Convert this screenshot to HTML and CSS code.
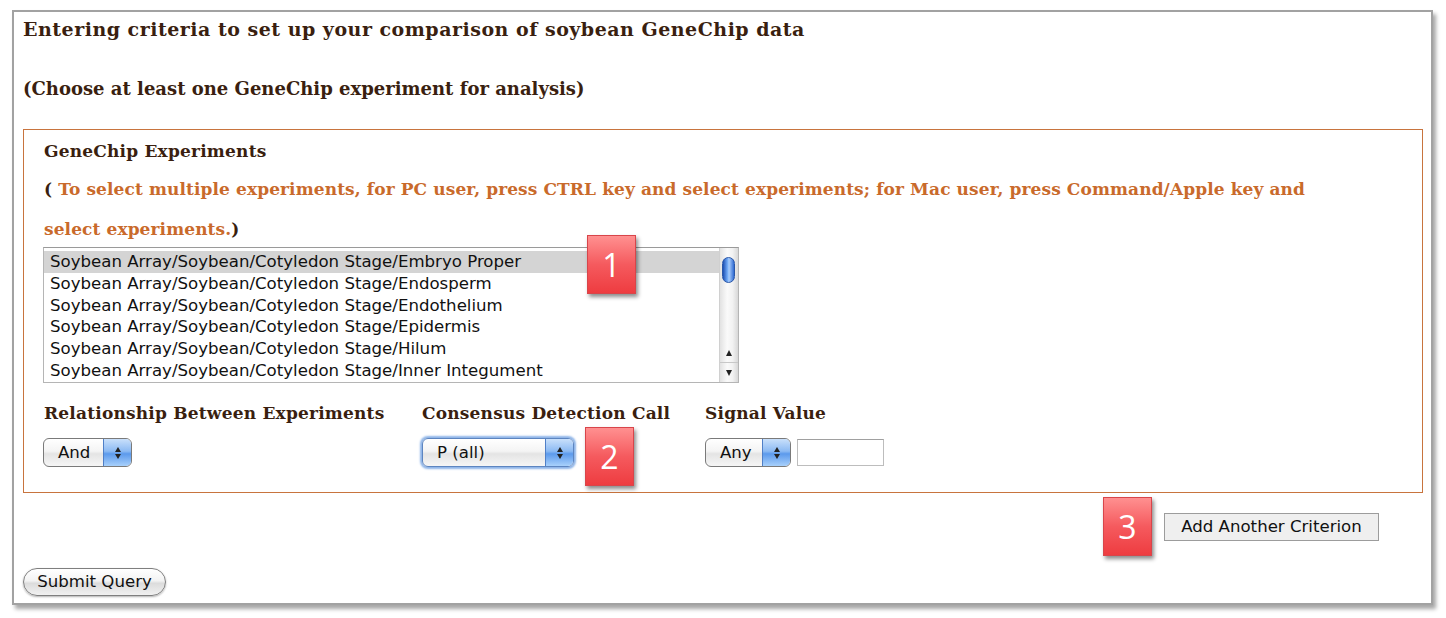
FILE: index.html
```html
<!DOCTYPE html>
<html>
<head>
<meta charset="utf-8">
<link rel="stylesheet" href="styles.css">
</head>
<body>
<div class="frame">
  <h1 class="title">Entering criteria to set up your comparison of soybean GeneChip data</h1>
  <h2 class="subtitle">(Choose at least one GeneChip experiment for analysis)</h2>
  <div class="fieldset">
    <div class="legend">GeneChip Experiments</div>
    <p class="hint"><span class="paren">(</span> To select multiple experiments, for PC user, press CTRL key and select experiments; for Mac user, press Command/Apple key and select experiments.<span class="paren">)</span></p>
    <div class="listbox">
      <div class="rows">
        <div class="row selected">Soybean Array/Soybean/Cotyledon Stage/Embryo Proper</div>
        <div class="row">Soybean Array/Soybean/Cotyledon Stage/Endosperm</div>
        <div class="row">Soybean Array/Soybean/Cotyledon Stage/Endothelium</div>
        <div class="row">Soybean Array/Soybean/Cotyledon Stage/Epidermis</div>
        <div class="row">Soybean Array/Soybean/Cotyledon Stage/Hilum</div>
        <div class="row">Soybean Array/Soybean/Cotyledon Stage/Inner Integument</div>
      </div>
      <div class="scrollbar">
        <div class="track"><div class="thumb"></div></div>
        <div class="arrow up"><span class="tri-up"></span></div>
        <div class="arrow down"><span class="tri-down"></span></div>
      </div>
    </div>
    <div class="criteria">
      <div class="col col1">
        <div class="label">Relationship Between Experiments</div>
        <div class="popup w-and"><span class="ptext">And</span><span class="pbtn"><span class="tri-up small"></span><span class="tri-down small"></span></span></div>
      </div>
      <div class="col col2">
        <div class="label">Consensus Detection Call</div>
        <div class="popup w-p focus"><span class="ptext">P (all)</span><span class="pbtn"><span class="tri-up small"></span><span class="tri-down small"></span></span></div>
      </div>
      <div class="col col3">
        <div class="label">Signal Value</div>
        <div class="inline">
          <div class="popup w-any"><span class="ptext">Any</span><span class="pbtn"><span class="tri-up small"></span><span class="tri-down small"></span></span></div>
          <div class="textbox"></div>
        </div>
      </div>
    </div>
  </div>
  <div class="addrow"><div class="addbtn">Add Another Criterion</div></div>
  <div class="submitrow"><div class="submitbtn">Submit Query</div></div>

  <div class="badge b1">1</div>
  <div class="badge b2">2</div>
  <div class="badge b3">3</div>
</div>
</body>
</html>
```

FILE: styles.css
```css
html, body { margin: 0; padding: 0; background: #fff; }
body { width: 1446px; height: 618px; overflow: hidden; }

.frame {
  position: relative;
  margin: 10px 0 0 12px;
  height: 591px;
  width: 1400px;
  border: 2px solid #a2a2a2;
  box-shadow: 3px 4px 4px rgba(0,0,0,0.35);
  padding: 0 8px 0 9px;
  box-sizing: content-box;
  font-family: "DejaVu Serif", Georgia, serif;
  color: #3a1f10;
}

.title {
  margin: 7px 0 0;
  font-size: 19px;
  letter-spacing: 0.5px;
  line-height: 20px;
  font-weight: bold;
  white-space: nowrap;
}
.subtitle {
  margin: 40px 0 0;
  font-size: 18px;
  line-height: 20px;
  font-weight: bold;
  white-space: nowrap;
}

.fieldset {
  margin-top: 30px;
  border: 1px solid #c8743e;
  padding: 11px 0 25px 20px;
}
.legend {
  font-size: 17px;
  letter-spacing: 0.2px;
  line-height: 20px;
  font-weight: bold;
}
.hint {
  margin: 8px 0 0;
  font-size: 17px;
  letter-spacing: 0.1px;
  line-height: 40px;
  font-weight: bold;
  color: #c96a2b;
  width: 1275px;
}
.paren { color: #3a1f10; }

.listbox {
  margin-top: -2px;
  margin-left: -1px;
  width: 694px;
  height: 134px;
  border: 1px solid #b5b5b5;
  border-top-color: #9a9a9a;
  display: flex;
  font-family: "DejaVu Sans", "Lucida Grande", sans-serif;
  font-size: 16.6px;
  color: #111;
}
.rows { flex: 1; padding-top: 3px; overflow: hidden; }
.row { height: 21.8px; line-height: 21.8px; padding-left: 6px; white-space: nowrap; }
.row.selected { background: #d4d4d4; }

.scrollbar {
  width: 18px;
  display: flex;
  flex-direction: column;
  background: linear-gradient(to right, #e2e2e2, #fafafa 40%, #f2f2f2 70%, #d8d8d8);
  border-left: 1px solid #d0d0d0;
}
.track { flex: 1; position: relative; }
.thumb {
  position: absolute;
  left: 2px; top: 9px;
  width: 13px; height: 26px;
  border-radius: 7px;
  background: linear-gradient(to right, #1c4fb3, #6fa8f5 40%, #a9cdfb 55%, #2f6ad2);
  border: 1px solid #2a57a8;
  box-sizing: border-box;
}
.arrow { height: 19px; display: flex; align-items: center; justify-content: center; }
.arrow.down { border-top: 1px solid #c8c8c8; }

.tri-up, .tri-down {
  display: block;
  width: 0; height: 0;
  border-left: 3.5px solid transparent;
  border-right: 3.5px solid transparent;
}
.tri-up { border-bottom: 6px solid #222; }
.tri-down { border-top: 6px solid #222; }
.tri-up.small { border-bottom-width: 5px; margin-bottom: 2px; }
.tri-down.small { border-top-width: 5px; }

.criteria { display: flex; margin-top: 20px; }
.col1 { width: 378px; }
.col2 { width: 283px; }
.label {
  font-size: 17px;
  letter-spacing: 0.2px;
  line-height: 20px;
  font-weight: bold;
  white-space: nowrap;
}
.popup {
  margin-top: 15px;
  height: 29px;
  border: 1px solid #7a7a7a;
  border-radius: 6px;
  box-sizing: border-box;
  display: flex;
  overflow: hidden;
  background: linear-gradient(#ffffff, #f4f4f4 45%, #e4e4e4 55%, #f6f6f6);
  font-family: "DejaVu Sans", "Lucida Grande", sans-serif;
  font-size: 16.6px;
  color: #111;
}
.col1 .popup { margin-left: -1px; }
.ptext { flex: 1; padding-left: 14px; line-height: 27px; white-space: nowrap; }
.pbtn {
  width: 27px;
  display: flex;
  flex-direction: column;
  align-items: center;
  justify-content: center;
  background: linear-gradient(#c9e0fb, #8cbaf3 45%, #5c9aec 55%, #a8d0fb);
  border-left: 1px solid #4f7fc7;
}
.w-and { width: 89px; }
.w-p { width: 152px; }
.w-any { width: 86px; }
.focus { box-shadow: 0 0 2px 2px #8db4e8; border-color: #5d85c0; }

.inline { display: flex; align-items: flex-start; }
.textbox {
  margin-top: 16px;
  margin-left: 6px;
  width: 87px;
  height: 27px;
  box-sizing: border-box;
  border: 1px solid #bdbdbd;
  border-top-color: #a0a0a0;
  background: #fff;
}

.addrow { display: flex; justify-content: flex-end; margin-top: 20px; padding-right: 44px; }
.addbtn {
  width: 215px;
  height: 28px;
  box-sizing: border-box;
  border: 1px solid #9c9c9c;
  background: #efefef;
  font-family: "DejaVu Sans", "Lucida Grande", sans-serif;
  font-size: 16.6px;
  line-height: 26px;
  text-align: center;
  color: #111;
}

.submitrow { margin-top: 27px; }
.submitbtn {
  display: inline-block;
  width: 143px;
  height: 28px;
  box-sizing: border-box;
  border: 1px solid #7f7f7f;
  border-radius: 14px;
  background: linear-gradient(#ffffff, #f3f3f3 45%, #dcdcdc 55%, #f1f1f1);
  box-shadow: 0 1px 2px rgba(0,0,0,0.3);
  font-family: "DejaVu Sans", "Lucida Grande", sans-serif;
  font-size: 16.6px;
  line-height: 26px;
  text-align: center;
  color: #111;
}

.badge {
  position: absolute;
  width: 49px;
  height: 59px;
  box-sizing: border-box;
  border: 1px solid #d8454a;
  background: linear-gradient(#ff9090, #f55a5e 50%, #ee3c40);
  box-shadow: 2px 3px 4px rgba(0,0,0,0.45);
  color: #fff;
  font-family: "Open Sans", "DejaVu Sans", sans-serif;
  font-size: 32px;
  line-height: 57px;
  text-align: center;
}
.b1 { left: 573px; top: 223px; }
.b2 { left: 571px; top: 415px; }
.b3 { left: 1089px; top: 485px; }
```
